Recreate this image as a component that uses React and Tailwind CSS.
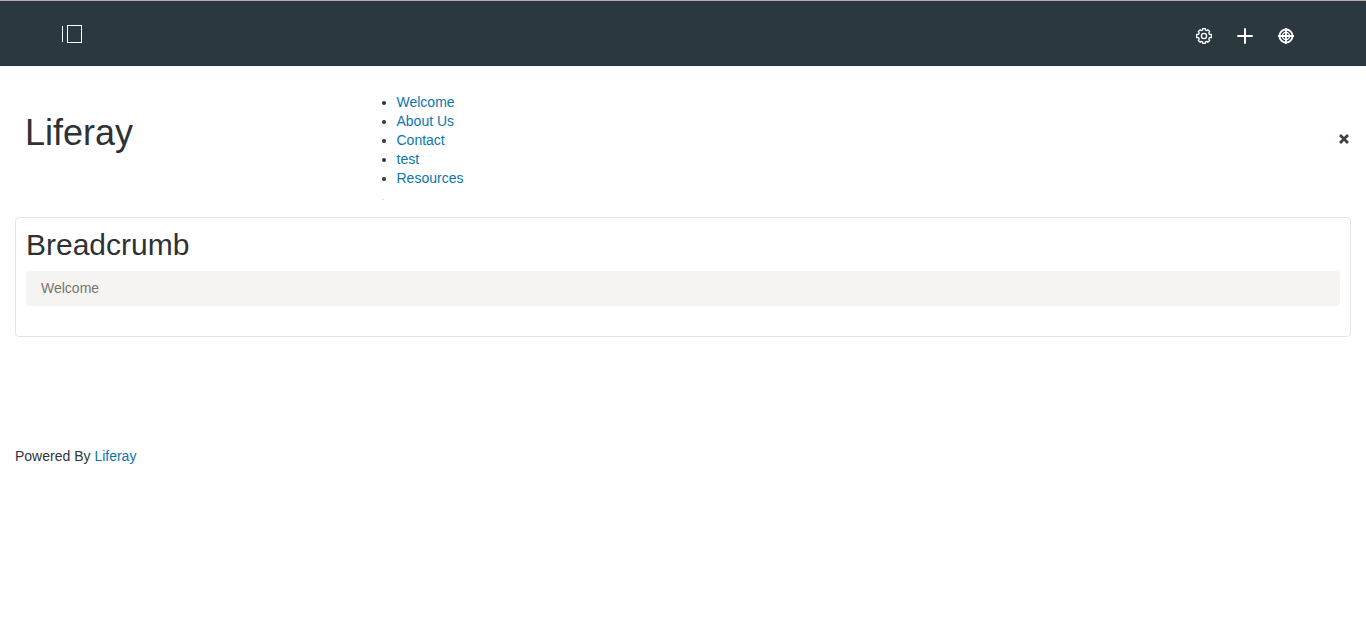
const links = ["Welcome", "About Us", "Contact", "test", "Resources"];

function SidebarIcon() {
  return (
    <svg width="21" height="18" viewBox="0 0 21 18" fill="none" stroke="#fff" shapeRendering="crispEdges" aria-hidden="true">
      <path d="M0.5 1v16" />
      <path d="M5.5 0.5h14v17h-14z" />
    </svg>
  );
}

function GearIcon() {
  return (
    <svg width="16" height="16" viewBox="0 0 16 16" fill="none" stroke="#fff" strokeWidth="1.3" strokeLinejoin="round" aria-hidden="true">
      <path d="M6.6 0.7h2.8v1.500l1.300.5 1.100-1 2 2-1 1.200.5 1.400h2v3.400h-2l-.5 1.400 1 1.200-2 2-1.100-1-1.300.5v1.500H6.600v-1.500L5.300 13.300l-1.100 1-2-2 1-1.200-.5-1.400H.7V6.300h2l.5-1.400-1-1.200 2-2 1.100 1 1.300-.5z" />
      <circle cx="8" cy="8" r="2.6" />
    </svg>
  );
}

function PlusIcon() {
  return (
    <svg width="16" height="16" viewBox="0 0 16 16" fill="none" stroke="#fff" strokeWidth="2" strokeLinecap="butt" aria-hidden="true">
      <path d="M8 0.3v15.4M0.3 8h15.4" />
    </svg>
  );
}

function TargetIcon() {
  return (
    <svg width="16" height="16" viewBox="0 0 16 16" fill="none" stroke="#fff" aria-hidden="true">
      <circle cx="8" cy="8" r="6.5" strokeWidth="1.8" />
      <circle cx="8" cy="8" r="3.6" strokeWidth="1.3" />
      <path d="M8 0v16M0 8h16" strokeWidth="1.8" />
    </svg>
  );
}

function CloseIcon() {
  return (
    <svg width="10" height="10" viewBox="0 0 10 10" fill="none" stroke="#3a4246" strokeWidth="2.8" aria-hidden="true">
      <path d="M1 1l8 8M9 1L1 9" />
    </svg>
  );
}

export default function App() {
  return (
    <div className="bg-white font-['Liberation_Sans',Arial,sans-serif] text-sm leading-[19px] text-[#2e353a]">
      <header className="flex h-[66px] items-center justify-between border-t border-b border-t-[#b3b0ab] border-b-[#27323a] bg-[#2b3840] pr-[72px] pl-[62px]">
        <button type="button" aria-label="Toggle menu" className="mt-0.5 block">
          <SidebarIcon />
        </button>
        <nav aria-label="Controls" className="mt-1.5 flex gap-[25px]">
          <button type="button" aria-label="Settings"><GearIcon /></button>
          <button type="button" aria-label="Add"><PlusIcon /></button>
          <button type="button" aria-label="Simulation"><TargetIcon /></button>
        </nav>
      </header>

      <section className="flex items-center pt-[27px] pb-[17px]">
        <h1 className="w-1/4 pb-7 pl-[25px] text-4xl leading-10 text-[#2f3133]">Liferay</h1>
        <nav aria-label="Site" className="flex-1 pl-[15px]">
          <ul className="list-disc pl-10">
            {links.map((label) => (
              <li key={label}>
                <a href="#" className="text-[#0b76ac] hover:underline">{label}</a>
              </li>
            ))}
          </ul>
          <div className="mt-[11px] ml-[25px] h-px w-0.5 bg-[#e3e3e3]" />
        </nav>
        <button type="button" aria-label="Close" className="mr-[17px] mb-4">
          <CloseIcon />
        </button>
      </section>

      <main className="px-[15px]">
        <section className="rounded border border-[#e5e5e5] px-[10px] pt-[10px] pb-[30px]">
          <h2 className="mb-[10px] text-[30px] leading-[33px] text-[#2f3133]">Breadcrumb</h2>
          <ol aria-label="Breadcrumb" className="rounded bg-[#f5f4f2] px-[15px] py-2">
            <li className="text-[#76746f]">Welcome</li>
          </ol>
        </section>
      </main>

      <footer className="mt-[110px] px-[15px]">
        Powered By <a href="#" className="text-[#0b76ac] hover:underline">Liferay</a>
      </footer>
    </div>
  );
}
